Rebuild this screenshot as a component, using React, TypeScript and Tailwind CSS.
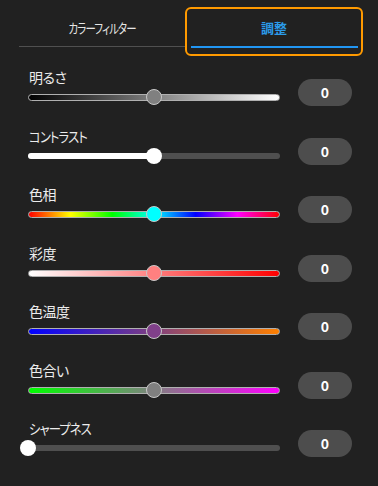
import React from "react";

type Row = {
  label: string;
  gradient?: string;
  thumb: string;
  thumbBorder: boolean;
  frac: number;
  fillWhite?: boolean;
  kana?: boolean;
};

const rows: Row[] = [
  { label: "明るさ", gradient: "linear-gradient(to right, #000000, #ffffff)", thumb: "#808080", thumbBorder: true, frac: 0.5 },
  { label: "コントラスト", thumb: "#ffffff", thumbBorder: false, frac: 0.5, fillWhite: true, kana: true },
  {
    label: "色相",
    gradient: "linear-gradient(to right, #ff0000, #ffff00, #00ff00, #00ffff, #0000ff, #ff00ff, #ff0000)",
    thumb: "#00ffff",
    thumbBorder: true,
    frac: 0.5,
  },
  { label: "彩度", gradient: "linear-gradient(to right, #ffffff, #ff0000)", thumb: "#ff8080", thumbBorder: true, frac: 0.5 },
  { label: "色温度", gradient: "linear-gradient(to right, #0000ff, #ff8000)", thumb: "#80408a", thumbBorder: true, frac: 0.5 },
  { label: "色合い", gradient: "linear-gradient(to right, #00ff00, #ff00ff)", thumb: "#808080", thumbBorder: true, frac: 0.5 },
  { label: "シャープネス", thumb: "#ffffff", thumbBorder: false, frac: 0, kana: true },
];

function Slider({ r }: { r: Row }) {
  return (
    <div className="relative h-[18px] w-[252px] mt-px">
      {r.gradient ? (
        <div
          className="absolute left-0 right-0 top-[6px] h-[7px] rounded-full border border-[#b0b0b0]"
          style={{ background: r.gradient }}
        />
      ) : (
        <div className="absolute left-0 right-0 top-[6px] h-[6px] rounded-full bg-[#4f4f4f]">
          {r.fillWhite && (
            <div className="h-full rounded-full bg-white" style={{ width: `${r.frac * 100}%` }} />
          )}
        </div>
      )}
      <div
        className={
          "absolute top-[1px] h-[16px] w-[16px] rounded-full -translate-x-1/2 " +
          (r.thumbBorder ? "border border-[#c8c8c8]" : "")
        }
        style={{ left: `${r.frac * 100}%`, background: r.thumb }}
      />
    </div>
  );
}

export default function App() {
  return (
    <div
      className="w-[378px] h-[486px] bg-[#212121] text-white overflow-hidden [font-feature-settings:'palt']"
      style={{ fontFamily: '"Noto Sans CJK JP", "Noto Sans", sans-serif' }}
    >
      <div className="flex pl-[19px] pt-[7px]">
        <div className="w-[166px] mt-[2px] h-[38px] border-b border-[#505050] flex items-center justify-center text-[13px] text-[#e6e6e6]">
          <span className="inline-block scale-x-[0.8] tracking-[-1px] whitespace-nowrap">カラーフィルター</span>
        </div>
        <div className="w-[178px] h-[49px] border-[2.5px] border-[#ff9a00] rounded-[6px] px-[3.5px] pb-[6px]">
          <div className="h-full flex flex-col">
            <div className="flex-1 flex items-center justify-center text-[13px] font-bold text-[#2b9bea]">
              調整
            </div>
            <div className="h-[2px] bg-[#2196f3]" />
          </div>
        </div>
      </div>
      <div className="pt-[11px]">
        {rows.map((r) => (
          <div key={r.label} className="h-[58.5px] flex items-start pl-[28px]">
            <div className="flex flex-col w-[252px]">
              <div className="h-[20px] leading-[20px] text-[14px] text-[#ececec] pl-px whitespace-nowrap">
                <span
                  className={
                    "inline-block origin-left " +
                    (r.kana ? "scale-x-[0.88] tracking-[-1px]" : "tracking-[-0.5px]")
                  }
                >
                  {r.label}
                </span>
              </div>
              <Slider r={r} />
            </div>
            <div className="ml-[18px] mt-[12px] w-[54px] h-[27px] rounded-full bg-[#4d4d4d] flex items-center justify-center text-[14px] font-bold text-white">
              0
            </div>
          </div>
        ))}
      </div>
    </div>
  );
}
